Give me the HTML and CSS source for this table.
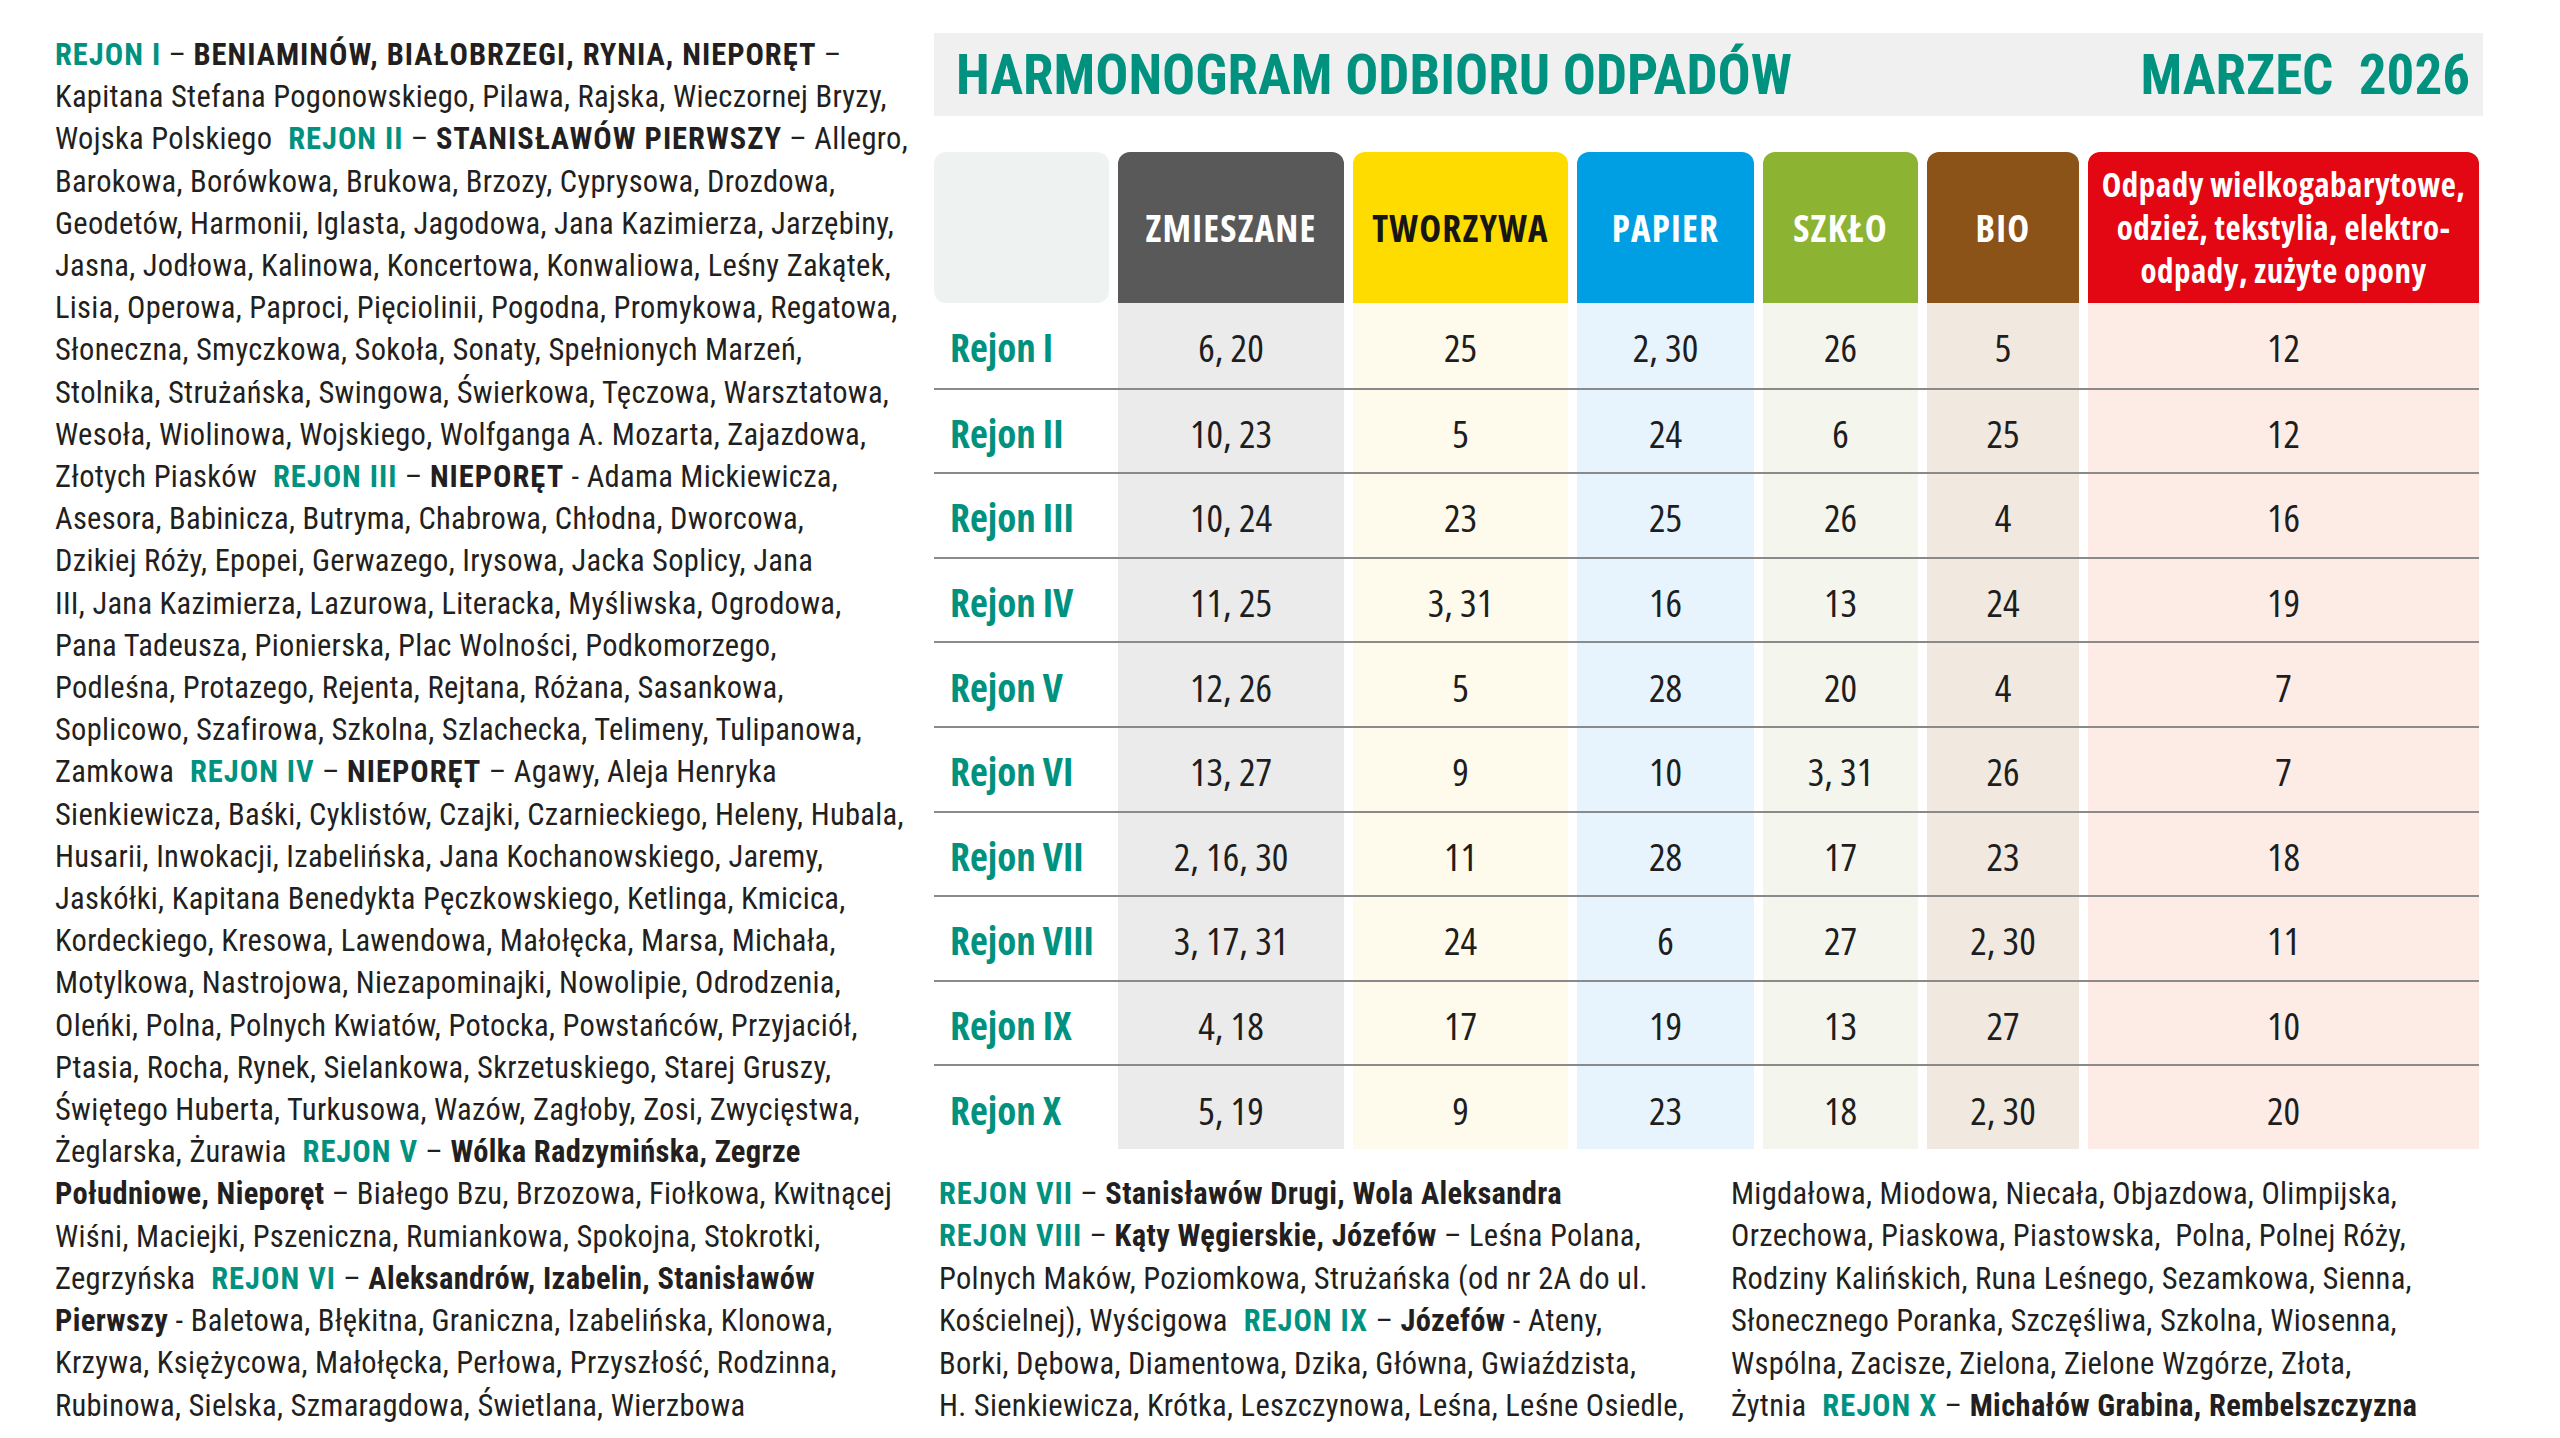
FILE: index.html
```html
<!DOCTYPE html>
<html lang="pl">
<head>
<meta charset="utf-8">
<title>Harmonogram odbioru odpadów – marzec 2026</title>
<link rel="stylesheet" href="styles.css">
</head>
<body>
<div class="page">
  <section class="streets">
    <p class="list">
<b class="rj">REJON I</b> – <b class="caps">BENIAMINÓW, BIAŁOBRZEGI, RYNIA, NIEPORĘT</b> –<br>
Kapitana Stefana Pogonowskiego, Pilawa, Rajska, Wieczornej Bryzy,<br>
Wojska Polskiego <b class="rj gap">REJON II</b> – <b class="caps">STANISŁAWÓW PIERWSZY</b> – Allegro,<br>
Barokowa, Borówkowa, Brukowa, Brzozy, Cyprysowa, Drozdowa,<br>
Geodetów, Harmonii, Iglasta, Jagodowa, Jana Kazimierza, Jarzębiny,<br>
Jasna, Jodłowa, Kalinowa, Koncertowa, Konwaliowa, Leśny Zakątek,<br>
Lisia, Operowa, Paproci, Pięciolinii, Pogodna, Promykowa, Regatowa,<br>
Słoneczna, Smyczkowa, Sokoła, Sonaty, Spełnionych Marzeń,<br>
Stolnika, Strużańska, Swingowa, Świerkowa, Tęczowa, Warsztatowa,<br>
Wesoła, Wiolinowa, Wojskiego, Wolfganga A. Mozarta, Zajazdowa,<br>
Złotych Piasków <b class="rj gap">REJON III</b> – <b class="caps">NIEPORĘT</b> - Adama Mickiewicza,<br>
Asesora, Babinicza, Butryma, Chabrowa, Chłodna, Dworcowa,<br>
Dzikiej Róży, Epopei, Gerwazego, Irysowa, Jacka Soplicy, Jana<br>
III, Jana Kazimierza, Lazurowa, Literacka, Myśliwska, Ogrodowa,<br>
Pana Tadeusza, Pionierska, Plac Wolności, Podkomorzego,<br>
Podleśna, Protazego, Rejenta, Rejtana, Różana, Sasankowa,<br>
Soplicowo, Szafirowa, Szkolna, Szlachecka, Telimeny, Tulipanowa,<br>
Zamkowa <b class="rj gap">REJON IV</b> – <b class="caps">NIEPORĘT</b> – Agawy, Aleja Henryka<br>
Sienkiewicza, Baśki, Cyklistów, Czajki, Czarnieckiego, Heleny, Hubala,<br>
Husarii, Inwokacji, Izabelińska, Jana Kochanowskiego, Jaremy,<br>
Jaskółki, Kapitana Benedykta Pęczkowskiego, Ketlinga, Kmicica,<br>
Kordeckiego, Kresowa, Lawendowa, Małołęcka, Marsa, Michała,<br>
Motylkowa, Nastrojowa, Niezapominajki, Nowolipie, Odrodzenia,<br>
Oleńki, Polna, Polnych Kwiatów, Potocka, Powstańców, Przyjaciół,<br>
Ptasia, Rocha, Rynek, Sielankowa, Skrzetuskiego, Starej Gruszy,<br>
Świętego Huberta, Turkusowa, Wazów, Zagłoby, Zosi, Zwycięstwa,<br>
Żeglarska, Żurawia <b class="rj gap">REJON V</b> – <b>Wólka Radzymińska, Zegrze<br>
Południowe, Nieporęt</b> – Białego Bzu, Brzozowa, Fiołkowa, Kwitnącej<br>
Wiśni, Maciejki, Pszeniczna, Rumiankowa, Spokojna, Stokrotki,<br>
Zegrzyńska <b class="rj gap">REJON VI</b> – <b>Aleksandrów, Izabelin, Stanisławów<br>
Pierwszy</b> - Baletowa, Błękitna, Graniczna, Izabelińska, Klonowa,<br>
Krzywa, Księżycowa, Małołęcka, Perłowa, Przyszłość, Rodzinna,<br>
Rubinowa, Sielska, Szmaragdowa, Świetlana, Wierzbowa
    </p>
  </section>

  <main class="schedule">
    <header class="title">
      <h1 class="title-main">HARMONOGRAM ODBIORU ODPADÓW</h1>
      <span class="title-month">MARZEC&nbsp; 2026</span>
    </header>

    <div class="table">
      <div class="row head">
        <div class="hcell blank"></div>
        <div class="hcell h-mix">ZMIESZANE</div>
        <div class="hcell h-pla">TWORZYWA</div>
        <div class="hcell h-pap">PAPIER</div>
        <div class="hcell h-gla">SZKŁO</div>
        <div class="hcell h-bio">BIO</div>
        <div class="hcell h-big">Odpady wielkogabarytowe,<br>odzież, tekstylia, elektro-<br>odpady, zużyte opony</div>
      </div>

      <div class="row body">
        <div class="label">Rejon I</div>
        <div class="cell c-mix">6, 20</div><div class="cell c-pla">25</div><div class="cell c-pap">2, 30</div><div class="cell c-gla">26</div><div class="cell c-bio">5</div><div class="cell c-big">12</div>
      </div>
      <div class="row body">
        <div class="label">Rejon II</div>
        <div class="cell c-mix">10, 23</div><div class="cell c-pla">5</div><div class="cell c-pap">24</div><div class="cell c-gla">6</div><div class="cell c-bio">25</div><div class="cell c-big">12</div>
      </div>
      <div class="row body">
        <div class="label">Rejon III</div>
        <div class="cell c-mix">10, 24</div><div class="cell c-pla">23</div><div class="cell c-pap">25</div><div class="cell c-gla">26</div><div class="cell c-bio">4</div><div class="cell c-big">16</div>
      </div>
      <div class="row body">
        <div class="label">Rejon IV</div>
        <div class="cell c-mix">11, 25</div><div class="cell c-pla">3, 31</div><div class="cell c-pap">16</div><div class="cell c-gla">13</div><div class="cell c-bio">24</div><div class="cell c-big">19</div>
      </div>
      <div class="row body">
        <div class="label">Rejon V</div>
        <div class="cell c-mix">12, 26</div><div class="cell c-pla">5</div><div class="cell c-pap">28</div><div class="cell c-gla">20</div><div class="cell c-bio">4</div><div class="cell c-big">7</div>
      </div>
      <div class="row body">
        <div class="label">Rejon VI</div>
        <div class="cell c-mix">13, 27</div><div class="cell c-pla">9</div><div class="cell c-pap">10</div><div class="cell c-gla">3, 31</div><div class="cell c-bio">26</div><div class="cell c-big">7</div>
      </div>
      <div class="row body">
        <div class="label">Rejon VII</div>
        <div class="cell c-mix">2, 16, 30</div><div class="cell c-pla">11</div><div class="cell c-pap">28</div><div class="cell c-gla">17</div><div class="cell c-bio">23</div><div class="cell c-big">18</div>
      </div>
      <div class="row body">
        <div class="label">Rejon VIII</div>
        <div class="cell c-mix">3, 17, 31</div><div class="cell c-pla">24</div><div class="cell c-pap">6</div><div class="cell c-gla">27</div><div class="cell c-bio">2, 30</div><div class="cell c-big">11</div>
      </div>
      <div class="row body">
        <div class="label">Rejon IX</div>
        <div class="cell c-mix">4, 18</div><div class="cell c-pla">17</div><div class="cell c-pap">19</div><div class="cell c-gla">13</div><div class="cell c-bio">27</div><div class="cell c-big">10</div>
      </div>
      <div class="row body">
        <div class="label">Rejon X</div>
        <div class="cell c-mix">5, 19</div><div class="cell c-pla">9</div><div class="cell c-pap">23</div><div class="cell c-gla">18</div><div class="cell c-bio">2, 30</div><div class="cell c-big">20</div>
      </div>
    </div>

    <div class="notes">
      <p class="note-col">
<b class="rj">REJON VII</b> – <b>Stanisławów Drugi, Wola Aleksandra</b><br>
<b class="rj">REJON VIII</b> – <b>Kąty Węgierskie, Józefów</b> – Leśna Polana,<br>
Polnych Maków, Poziomkowa, Strużańska (od nr 2A do ul.<br>
Kościelnej), Wyścigowa <b class="rj gap">REJON IX</b> – <b>Józefów</b> - Ateny,<br>
Borki, Dębowa, Diamentowa, Dzika, Główna, Gwiaździsta,<br>
H. Sienkiewicza, Krótka, Leszczynowa, Leśna, Leśne Osiedle,
      </p>
      <p class="note-col">
Migdałowa, Miodowa, Niecała, Objazdowa, Olimpijska,<br>
Orzechowa, Piaskowa, Piastowska,&nbsp; Polna, Polnej Róży,<br>
Rodziny Kalińskich, Runa Leśnego, Sezamkowa, Sienna,<br>
Słonecznego Poranka, Szczęśliwa, Szkolna, Wiosenna,<br>
Wspólna, Zacisze, Zielona, Zielone Wzgórze, Złota,<br>
Żytnia <b class="rj gap">REJON X</b> – <b>Michałów Grabina, Rembelszczyzna</b>
      </p>
    </div>
  </main>
</div>
</body>
</html>
```

FILE: styles.css
```css
* {
  box-sizing: border-box;
  margin: 0;
  padding: 0;
}

html,
body {
  width: 2560px;
  height: 1438px;
  background: #ffffff;
  overflow: hidden;
}

body {
  font-family: "Roboto Condensed", "DejaVu Sans Condensed", sans-serif;
  color: #231f20;
}

.page {
  display: flex;
  align-items: flex-start;
}

/* ---------- street lists (left column and under the table) ---------- */
.streets {
  width: 934px;
  flex: none;
  padding: 34px 0 0 55px;
  overflow: hidden;
}

.list,
.note-col {
  font-family: "Roboto Condensed", "DejaVu Sans Condensed", sans-serif;
  font-size: 30.5px;
  line-height: 42.2px;
  letter-spacing: 0.3px;
  white-space: nowrap;
}

b {
  font-weight: bold;
  letter-spacing: 0.35px;
}

.rj,
.caps {
  letter-spacing: 1px;
}

.rj {
  color: #00927f;
}

.gap {
  margin-left: 0.28em;
}

/* ---------- schedule ---------- */
.schedule {
  width: 1545px;
  flex: none;
  padding-top: 33px;
}

.title {
  height: 83px;
  margin-right: -4px;
  background: #f0f0f0;
  display: flex;
  justify-content: space-between;
  align-items: center;
  padding: 0 13px 0 22px;
  color: #00927f;
  font-family: "Roboto Condensed", "DejaVu Sans Condensed", sans-serif;
  font-weight: bold;
  font-size: 55px;
  white-space: nowrap;
}

.title-main {
  font-size: 55px;
  font-weight: bold;
}

.table {
  margin-top: 36px;
  font-family: "Open Sans", "DejaVu Sans Condensed", sans-serif;
  font-stretch: 75%;
}

.row {
  display: grid;
  grid-template-columns: 175px 226px 215px 177px 155px 152px 391px;
  column-gap: 9px;
}

.head {
  height: 151px;
}

.body {
  height: 84.6px;
}

.body + .body {
  border-top: 2px solid #8a8a8a;
}

.hcell {
  display: flex;
  align-items: center;
  justify-content: center;
  text-align: center;
  white-space: nowrap;
  border-radius: 12px 12px 0 0;
  color: #ffffff;
  font-weight: bold;
  font-size: 37px;
  letter-spacing: 1.2px;
}

.blank {
  background: #eef3f2;
  border-radius: 12px;
}

.h-mix { background: #595959; }
.h-pla { background: #ffdc00; color: #161616; }
.h-pap { background: #009fe3; }
.h-gla { background: #8cb332; }
.h-bio { background: #8c5318; }
.h-big {
  background: #e30613;
  font-size: 33px;
  line-height: 43px;
  letter-spacing: 0.5px;
}

.label {
  display: flex;
  align-items: center;
  padding: 3px 0 0 16px;
  white-space: nowrap;
  color: #00927f;
  font-weight: bold;
  font-size: 39px;
}

.cell {
  display: flex;
  align-items: center;
  justify-content: center;
  padding-top: 3px;
  white-space: nowrap;
  font-size: 39px;
  color: #1e1e1e;
}

.c-mix { background: #ebebeb; }
.c-pla { background: #fffbec; }
.c-pap { background: #e8f4fd; }
.c-gla { background: #f4f6ee; }
.c-bio { background: #f1e9e0; }
.c-big { background: #fdece6; }

/* ---------- notes under the table ---------- */
.notes {
  display: grid;
  grid-template-columns: 792px 1fr;
  padding-left: 5px;
  margin-top: 24px;
}

.note-col {
  line-height: 42.4px;
}
```
